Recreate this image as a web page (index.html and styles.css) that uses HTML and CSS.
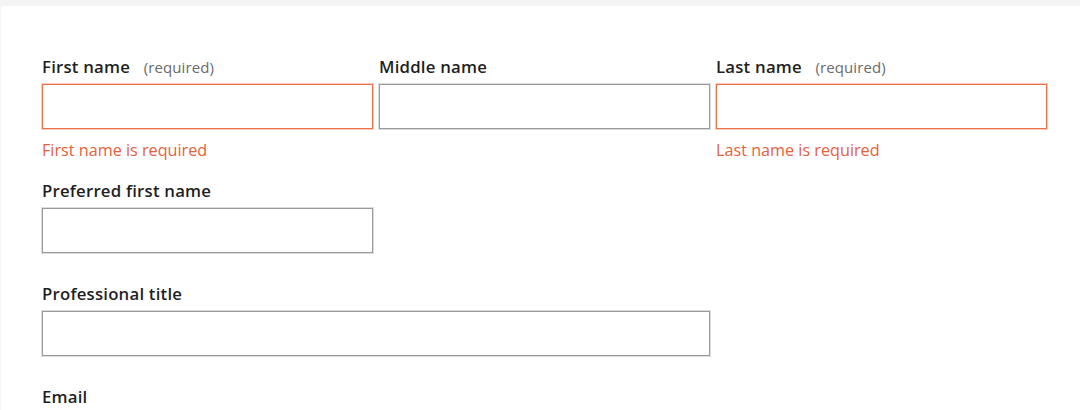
FILE: index.html
```html
<!DOCTYPE html>
<html>
<head>
<meta charset="utf-8">
<link rel="stylesheet" href="styles.css">
</head>
<body>
<div class="page">
  <form class="form">
    <div class="row row-3">
      <div class="field">
        <label class="label">First name <span class="hint">(required)</span></label>
        <input class="input input-error" type="text">
        <div class="error">First name is required</div>
      </div>
      <div class="field">
        <label class="label">Middle name</label>
        <input class="input" type="text">
      </div>
      <div class="field">
        <label class="label">Last name <span class="hint">(required)</span></label>
        <input class="input input-error" type="text">
        <div class="error">Last name is required</div>
      </div>
    </div>
    <div class="field field-narrow after-error">
      <label class="label">Preferred first name</label>
      <input class="input" type="text">
    </div>
    <div class="field field-wide">
      <label class="label">Professional title</label>
      <input class="input" type="text">
    </div>
    <div class="field field-wide">
      <label class="label">Email</label>
    </div>
  </form>
</div>
</body>
</html>
```
FILE: styles.css
```css
html, body {
  margin: 0;
  padding: 0;
  background: #f4f4f4;
  overflow: hidden;
}
body {
  font-family: "Open Sans", "Noto Sans", sans-serif;
  color: #1f1f1f;
}
.page {
  margin: 6px 0 0 1px;
  background: #ffffff;
  height: 404px;
  padding: 51px 0 0 41px;
  box-sizing: border-box;
  overflow: hidden;
}
.form {
  display: flex;
  flex-direction: column;
}
.row-3 {
  display: grid;
  grid-template-columns: 331px 331px 331px;
  column-gap: 6px;
}
.field {
  display: flex;
  flex-direction: column;
  margin-bottom: 31px;
}
.row-3 .field { margin-bottom: 0; }
.after-error { margin-top: 21px; }
.field-narrow { width: 331px; }
.field-wide { width: 668px; }
.label {
  font-size: 16.8px;
  font-weight: 600;
  line-height: 20px;
  height: 20px;
  margin-bottom: 7px;
  white-space: nowrap;
  letter-spacing: 0.2px;
}
.hint {
  font-size: 15px;
  font-weight: 400;
  color: #6b6b6b;
  margin-left: 9px;
  letter-spacing: 0.1px;
}
.input {
  display: block;
  box-sizing: border-box;
  width: 100%;
  height: 45px;
  margin: 0;
  padding: 0 8px;
  border: 1px solid #9a9a9a;
  outline: 1px solid rgba(154,154,154,0.35);
  outline-offset: 0;
  background: #fff;
  border-radius: 0;
}
.input-error {
  border-color: #ee7046;
  outline-color: rgba(238,112,70,0.35);
}
.error {
  margin-top: 11px;
  font-size: 16.2px;
  line-height: 20px;
  color: #e8603c;
}
```
